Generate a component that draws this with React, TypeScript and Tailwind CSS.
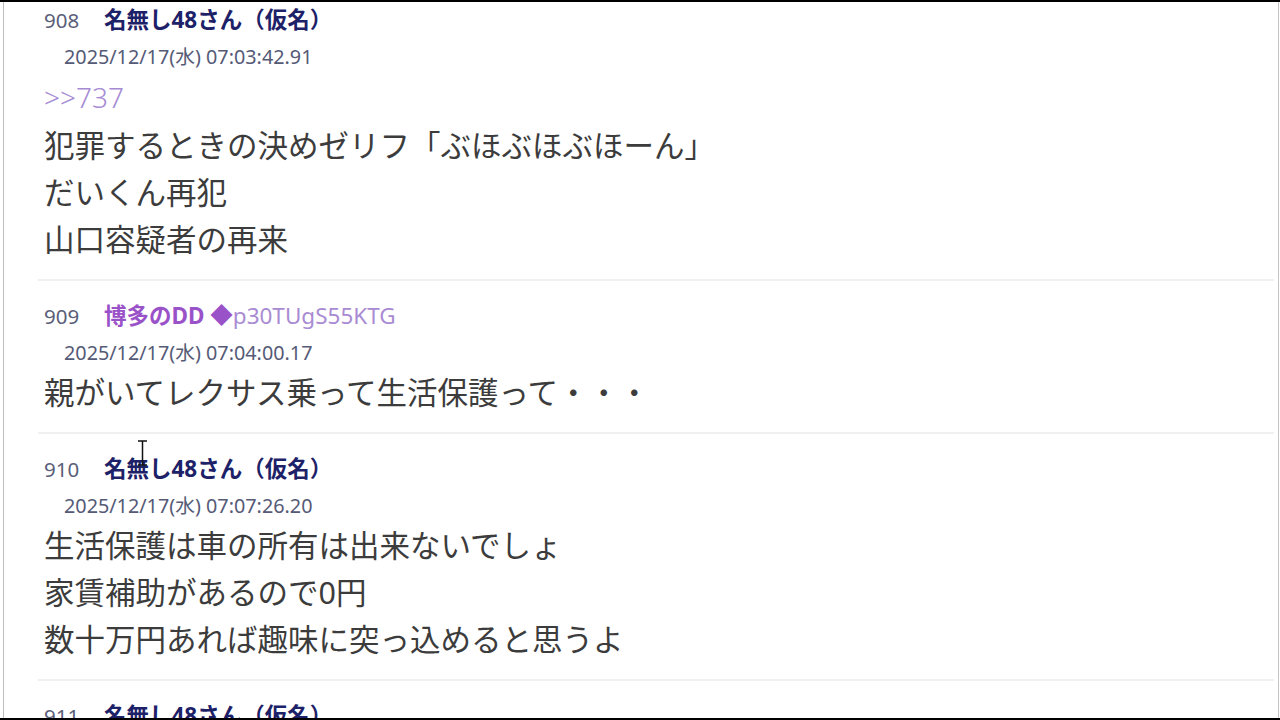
import type { ReactNode } from "react";

type Post = {
  no: number;
  name: ReactNode;
  date: string;
  anchor?: string;
  lines: string[];
};

const font = "font-['Noto_Sans','Noto_Sans_CJK_JP',sans-serif]";

const posts: Post[] = [
  {
    no: 908,
    name: <span className="font-bold text-[#1d2168]">名無し48さん（仮名）</span>,
    date: "2025/12/17(水) 07:03:42.91",
    anchor: ">>737",
    lines: ["犯罪するときの決めゼリフ「ぶほぶほぶほーん」", "だいくん再犯", "山口容疑者の再来"],
  },
  {
    no: 909,
    name: (
      <>
        <span className="font-bold text-[#9a52c9]">博多のDD ◆</span>
        <span className="text-[#a98bd3]">p30TUgS55KTG</span>
      </>
    ),
    date: "2025/12/17(水) 07:04:00.17",
    lines: ["親がいてレクサス乗って生活保護って・・・"],
  },
  {
    no: 910,
    name: <span className="font-bold text-[#1d2168]">名無し48さん（仮名）</span>,
    date: "2025/12/17(水) 07:07:26.20",
    lines: ["生活保護は車の所有は出来ないでしょ", "家賃補助があるので0円", "数十万円あれば趣味に突っ込めると思うよ"],
  },
  {
    no: 911,
    name: <span className="font-bold text-[#1d2168]">名無し48さん（仮名）</span>,
    date: "2025/12/17(水) 07:09:11.02",
    lines: [""],
  },
];

function PostItem({ post, first }: { post: Post; first: boolean }) {
  return (
    <article className={`${first ? "pt-[2px]" : "border-t-2 border-[#f0f0f0] pt-[17px]"} pb-[16px] pl-[6px]`}>
      <div className="flex h-[36px] items-center">
        <span className="w-[60px] text-[20.5px] text-[#5a5e78]">{post.no}</span>
        <span className="text-[22.5px]">{post.name}</span>
      </div>
      <div className="flex h-[38px] items-center pl-[20px] text-[19.8px] text-[#555a76]">{post.date}</div>
      <div className="-mt-[3px] text-[30.5px] leading-[47px] text-[#3c3c3c]">
        {post.anchor ? <p className="text-[28px] font-light leading-[49px] text-[#a68bd4]">{post.anchor}</p> : null}
        {post.lines.map((line, i) => (
          <p key={i}>{line}</p>
        ))}
      </div>
    </article>
  );
}

export default function App() {
  return (
    <div className={`relative h-[720px] w-[1280px] overflow-hidden bg-white ${font}`}>
      <div className="absolute inset-x-0 top-0 z-10 h-[2px] bg-black" />
      <div className="absolute inset-x-0 bottom-0 z-10 h-[2px] bg-black" />
      <div className="flex h-full">
        <div className="w-[3px] shrink-0" />
        <div className="w-px shrink-0 bg-[#bdbdbd]" />
        <div className="flex-1 pl-[34px] pr-[4px]">
          {posts.map((post, i) => (
            <PostItem key={post.no} post={post} first={i === 0} />
          ))}
        </div>
        <div className="w-px shrink-0 bg-[#c4c4c4]" />
        <div className="w-px shrink-0" />
      </div>
      {/* text cursor */}
      <svg className="absolute left-[137px] top-[440px]" width="11" height="26" viewBox="0 0 11 26">
        <path d="M1 1h9M5.5 1v24M1 25h9" stroke="#111" strokeWidth="1.5" fill="none" />
      </svg>
    </div>
  );
}
